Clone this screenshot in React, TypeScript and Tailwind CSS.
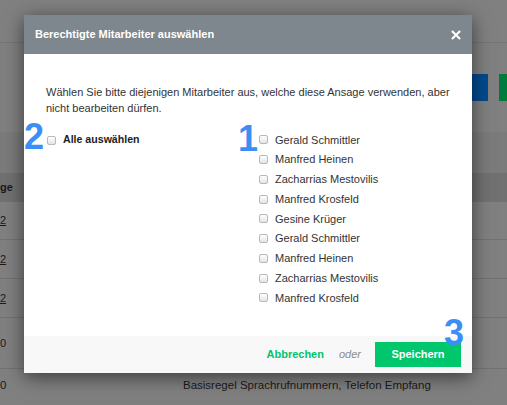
import { X } from 'lucide-react';

const names = [
    'Gerald Schmittler',
    'Manfred Heinen',
    'Zacharrias Mestovilis',
    'Manfred Krosfeld',
    'Gesine Krüger',
    'Gerald Schmittler',
    'Manfred Heinen',
    'Zacharrias Mestovilis',
    'Manfred Krosfeld',
];

const Checkbox = () => (
    <span className="inline-block w-[9px] h-[9px] shrink-0 rounded-[2px] border border-[#b9b9b9] bg-gradient-to-b from-white to-[#e4e4e4]" />
);

const Marker = ({ n, className }: { n: string; className: string }) => (
    <span className={`absolute text-[36px] leading-none font-bold text-[#3a8ef6] ${className}`}>{n}</span>
);

export default function App() {
    return (
        <div className="relative w-[507px] h-[405px] overflow-hidden bg-[#808080] font-['Liberation_Sans',Arial,sans-serif] text-[11px]">
            {/* page behind the overlay */}
            <div className="flex flex-col">
                <div className="h-[43px] border-b border-[#767676]" />
                <div className="h-[89px] flex justify-end items-start pt-[31px] gap-[11px]">
                    <div className="w-[16px] h-[27px] bg-[#004b8f]" />
                    <div className="w-[8px] h-[27px] bg-[#007a3e]" />
                </div>
                <div className="h-[41px] bg-[#7b7b7b]" />
                <div className="h-[29px] bg-[#717171] flex items-center font-bold text-[#1a1a1a]">ge</div>
                <div className="h-[38px] border-b border-[#727272] flex items-center text-[#1a1a1a] underline">2</div>
                <div className="h-[39px] border-b border-[#727272] flex items-center text-[#1a1a1a] underline">2</div>
                <div className="h-[39px] border-b border-[#727272] flex items-center text-[#1a1a1a] underline">2</div>
                <div className="h-[51px] border-b border-[#727272] flex items-center text-[#1a1a1a]">0</div>
                <div className="h-[34px] flex items-center text-[#1a1a1a] text-[11.5px]">
                    <span className="w-[183px]">0</span>
                    <span>Basisregel Sprachrufnummern, Telefon Empfang</span>
                </div>
            </div>

            {/* modal */}
            <div className="absolute left-[24px] top-[15px] w-[448px] bg-white shadow-[0_4px_18px_rgba(0,0,0,0.55)]">
                <div className="h-[39px] bg-[#7e868e] flex items-center justify-between pl-[11px] pr-[9px] text-white font-bold">
                    <span>Berechtigte Mitarbeiter auswählen</span>
                    <X size={14} strokeWidth={3.6} />
                </div>
                <div className="pt-[30px] px-[22px] pb-[28px] text-[#333]">
                    <p className="leading-[16px]">
                        Wählen Sie bitte diejenigen Mitarbeiter aus, welche diese Ansage verwenden, aber nicht bearbeiten dürfen.
                    </p>
                    <div className="grid grid-cols-[213px_1fr] mt-[14px]">
                        <div>
                            <label className="h-[20px] flex items-center gap-[7px] pl-[1px] font-bold text-[10.6px] text-[#222]">
                                <Checkbox />
                                Alle auswählen
                            </label>
                        </div>
                        <div>
                            {names.map((name, i) => (
                                <label key={i} className="h-[19.75px] flex items-center gap-[7px] text-[#333]">
                                    <Checkbox />
                                    {name}
                                </label>
                            ))}
                        </div>
                    </div>
                </div>
                <div className="h-[37px] bg-[#f8f8f8] flex items-center justify-end pr-[11px]">
                    <span className="font-bold text-[#00c46a]">Abbrechen</span>
                    <span className="italic text-[#8a8a8a] ml-[15px] mr-[14px]">oder</span>
                    <button className="w-[86px] h-[25px] bg-[#00c76c] text-white font-bold">Speichern</button>
                </div>
            </div>

            {/* annotation numbers */}
            <Marker n="2" className="left-[24px] top-[119px]" />
            <Marker n="1" className="left-[238px] top-[121px]" />
            <Marker n="3" className="left-[444px] top-[315px]" />
        </div>
    );
}
